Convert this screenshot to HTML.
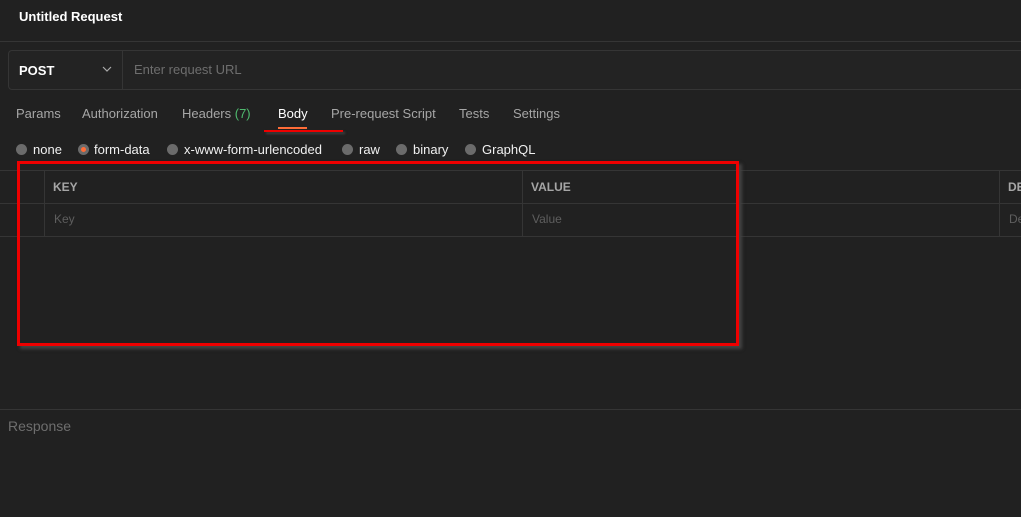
<!DOCTYPE html><html><head><style>
body{margin:0;width:1021px;height:517px;background:#212121;font-family:"Liberation Sans",sans-serif;position:relative;overflow:hidden;color:#fff}
.a{position:absolute;white-space:nowrap}
.h{position:absolute;height:1px;background:#353535}
.v{position:absolute;width:1px;background:#353535}
.t{font-size:13px;color:#a6a6a6;top:106px}
.r{position:absolute;width:11px;height:11px;border-radius:50%;background:#6b6b6b;top:144px}
.rl{font-size:13px;color:#f0f0f0;top:142px}
</style></head><body>
<div class="a" style="left:19px;top:9px;font-size:13px;font-weight:bold">Untitled Request</div>
<div class="h" style="left:0;top:41px;width:1021px"></div>
<div class="a" style="left:8px;top:50px;width:1020px;height:38px;border:1px solid #353535;border-radius:4px;background:#232323"></div>
<div class="v" style="left:122px;top:51px;height:38px"></div>
<div class="a" style="left:19px;top:63px;font-size:13px;font-weight:bold">POST</div>
<svg class="a" style="left:102px;top:66px" width="10" height="7"><path d="M1 1l4 4 4-4" stroke="#aaa" fill="none" stroke-width="1.2"/></svg>
<div class="a" style="left:134px;top:62px;font-size:13px;color:#6e6e6e">Enter request URL</div>
<div class="a t" style="left:16px">Params</div>
<div class="a t" style="left:82px">Authorization</div>
<div class="a t" style="left:182px">Headers <span style="color:#4fba6f">(7)</span></div>
<div class="a t" style="left:278px;color:#fff">Body</div>
<div class="a" style="left:278px;top:127px;width:29px;height:2px;background:#ff6c37"></div>
<div class="a" style="left:264px;top:130px;width:79px;height:2px;background:#e00;box-shadow:2px 2px 2px #444"></div>
<div class="a t" style="left:331px">Pre-request Script</div>
<div class="a t" style="left:459px">Tests</div>
<div class="a t" style="left:513px">Settings</div>
<div class="r" style="left:16px"></div><div class="a rl" style="left:33px">none</div>
<div class="r" style="left:78px;background:#6b6b6b"><div style="margin:3px;width:5px;height:5px;border-radius:50%;background:#ff6c37"></div></div><div class="a rl" style="left:94px">form-data</div>
<div class="r" style="left:167px"></div><div class="a rl" style="left:184px">x-www-form-urlencoded</div>
<div class="r" style="left:342px"></div><div class="a rl" style="left:359px">raw</div>
<div class="r" style="left:396px"></div><div class="a rl" style="left:413px">binary</div>
<div class="r" style="left:465px"></div><div class="a rl" style="left:482px">GraphQL</div>
<div class="h" style="left:0;top:170px;width:1021px"></div>
<div class="h" style="left:0;top:203px;width:1021px"></div>
<div class="h" style="left:0;top:236px;width:1021px"></div>
<div class="v" style="left:44px;top:170px;height:66px"></div>
<div class="v" style="left:522px;top:170px;height:66px"></div>
<div class="v" style="left:999px;top:170px;height:66px"></div>
<div class="a" style="left:53px;top:180px;font-size:12px;font-weight:bold;color:#a6a6a6">KEY</div>
<div class="a" style="left:531px;top:180px;font-size:12px;font-weight:bold;color:#a6a6a6">VALUE</div>
<div class="a" style="left:1008px;top:180px;font-size:12px;font-weight:bold;color:#a6a6a6">DE</div>
<div class="a" style="left:54px;top:212px;font-size:12px;color:#5e5e5e">Key</div>
<div class="a" style="left:532px;top:212px;font-size:12px;color:#5e5e5e">Value</div>
<div class="a" style="left:1009px;top:212px;font-size:12px;color:#5e5e5e">De</div>
<div class="a" style="left:17px;top:161px;width:716px;height:179px;border:3px solid #e00;box-shadow:3px 3px 3px #444"></div>
<div class="h" style="left:0;top:409px;width:1021px"></div>
<div class="a" style="left:8px;top:418px;font-size:14px;color:#6e6e6e">Response</div>
</body></html>
